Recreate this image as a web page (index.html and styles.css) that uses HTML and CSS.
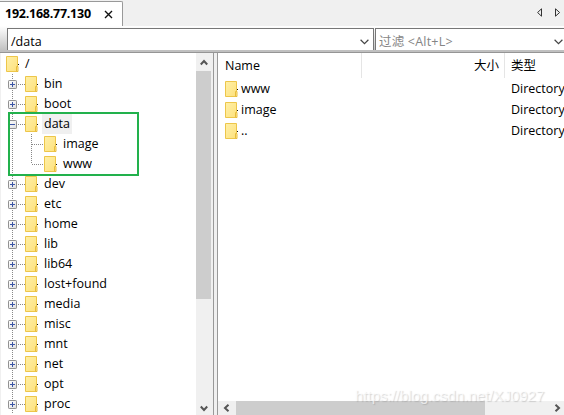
FILE: index.html
```html
<!DOCTYPE html>
<html lang="zh">
<head>
<meta charset="utf-8">
<title>192.168.77.130</title>
<link rel="stylesheet" href="styles.css">
</head>
<body>
<svg class="defs" width="0" height="0">
  <defs>
    <linearGradient id="paper" x1="0" y1="0" x2="1" y2="1">
      <stop offset="0" stop-color="#fff0a8"/><stop offset="1" stop-color="#fde17c"/>
    </linearGradient>
    <linearGradient id="key" x1="0" y1="0" x2="1" y2="1">
      <stop offset="0" stop-color="#fff"/><stop offset="1" stop-color="#dedede"/>
    </linearGradient>
    <symbol id="folder" viewBox="0 0 13 16">
      <path d="M.5 .5h11v15H.5z" fill="url(#paper)" stroke="#edc64a"/>
      <path d="M10.5 15.5v-5h1.5v5z" fill="#ffe99a" stroke="#e8bd3d"/>
      <path d="M12 8h1v1h-1z" fill="#111"/>
    </symbol>
    <symbol id="plus" viewBox="0 0 9 9">
      <rect x=".5" y=".5" width="8" height="8" rx=".7" fill="url(#key)" stroke="#919191"/>
      <path d="M2 4.5h5M4.5 2v5" stroke="#3b55a5"/>
    </symbol>
    <symbol id="minus" viewBox="0 0 9 9">
      <rect x=".5" y=".5" width="8" height="8" rx=".7" fill="url(#key)" stroke="#919191"/>
      <path d="M2 4.5h5" stroke="#3b55a5"/>
    </symbol>
  </defs>
</svg>
<div class="app">
  <header class="tabs">
    <div class="tab"><b>192.168.77.130</b>
      <svg width="9" height="9" viewBox="0 0 9 9"><path d="M1 1l7 7M8 1L1 8" stroke="#111" stroke-width="1.4"/></svg>
    </div>
    <div class="pager">
      <svg width="6" height="9" viewBox="0 0 6 9"><path d="M4.5 .8v7.4L.6 4.5z" fill="none" stroke="#333"/></svg>
      <svg width="6" height="9" viewBox="0 0 6 9"><path d="M.5 .8v7.4l4.1-3.7z" fill="none" stroke="#333"/></svg>
    </div>
  </header>
  <div class="bar">
    <div class="combo path"><span>/data</span><svg width="9" height="6" viewBox="0 0 9 6"><path d="M.6 .8l3.9 3.8L8.4 .8" fill="none" stroke="#444" stroke-width="1.2"/></svg></div>
    <div class="combo filter"><span>过滤 &lt;Alt+L&gt;</span><svg width="9" height="6" viewBox="0 0 9 6"><path d="M.6 .8l3.9 3.8L8.4 .8" fill="none" stroke="#444" stroke-width="1.2"/></svg></div>
  </div>
  <main class="panes">
    <section class="tree">
      <div class="nodes">
        <div class="row root"><svg class="f"><use href="#folder"/></svg><span>/</span></div>
        <div class="kids">
          <div class="row"><svg class="x"><use href="#plus"/></svg><i></i><svg class="f"><use href="#folder"/></svg><span>bin</span></div>
          <div class="row"><svg class="x"><use href="#plus"/></svg><i></i><svg class="f"><use href="#folder"/></svg><span>boot</span></div>
          <div class="row"><svg class="x"><use href="#minus"/></svg><i></i><svg class="f"><use href="#folder"/></svg><span class="sel">data</span></div>
          <div class="row sub"><i></i><svg class="f"><use href="#folder"/></svg><span>image</span></div>
          <div class="row sub last"><i></i><svg class="f"><use href="#folder"/></svg><span>www</span></div>
          <div class="row"><svg class="x"><use href="#plus"/></svg><i></i><svg class="f"><use href="#folder"/></svg><span>dev</span></div>
          <div class="row"><svg class="x"><use href="#plus"/></svg><i></i><svg class="f"><use href="#folder"/></svg><span>etc</span></div>
          <div class="row"><svg class="x"><use href="#plus"/></svg><i></i><svg class="f"><use href="#folder"/></svg><span>home</span></div>
          <div class="row"><svg class="x"><use href="#plus"/></svg><i></i><svg class="f"><use href="#folder"/></svg><span>lib</span></div>
          <div class="row"><svg class="x"><use href="#plus"/></svg><i></i><svg class="f"><use href="#folder"/></svg><span>lib64</span></div>
          <div class="row"><svg class="x"><use href="#plus"/></svg><i></i><svg class="f"><use href="#folder"/></svg><span>lost+found</span></div>
          <div class="row"><svg class="x"><use href="#plus"/></svg><i></i><svg class="f"><use href="#folder"/></svg><span>media</span></div>
          <div class="row"><svg class="x"><use href="#plus"/></svg><i></i><svg class="f"><use href="#folder"/></svg><span>misc</span></div>
          <div class="row"><svg class="x"><use href="#plus"/></svg><i></i><svg class="f"><use href="#folder"/></svg><span>mnt</span></div>
          <div class="row"><svg class="x"><use href="#plus"/></svg><i></i><svg class="f"><use href="#folder"/></svg><span>net</span></div>
          <div class="row"><svg class="x"><use href="#plus"/></svg><i></i><svg class="f"><use href="#folder"/></svg><span>opt</span></div>
          <div class="row"><svg class="x"><use href="#plus"/></svg><i></i><svg class="f"><use href="#folder"/></svg><span>proc</span></div>
        </div>
      </div>
      <div class="vscroll">
        <div class="up"><svg width="8" height="7" viewBox="0 0 8 7"><path d="M.8 5.5L4 2l3.2 3.5" fill="none" stroke="#555" stroke-width="2"/></svg></div>
        <div class="vthumb"></div>
        <div class="down"><svg width="8" height="7" viewBox="0 0 8 7"><path d="M.8 1.5L4 5l3.2-3.5" fill="none" stroke="#555" stroke-width="2"/></svg></div>
      </div>
    </section>
    <section class="list">
      <div class="head"><span class="name">Name</span><span class="size">大小</span><span class="type">类型</span></div>
      <div class="item"><svg class="f"><use href="#folder"/></svg><span class="label">www</span><span>Directory</span></div>
      <div class="item"><svg class="f"><use href="#folder"/></svg><span class="label">image</span><span>Directory</span></div>
      <div class="item"><svg class="f"><use href="#folder"/></svg><span class="label">..</span><span>Directory</span></div>
      <div class="hscroll">
        <div class="left"><svg width="7" height="8" viewBox="0 0 7 8"><path d="M5.5 .8L2 4l3.5 3.2" fill="none" stroke="#555" stroke-width="2"/></svg></div>
        <div class="hthumb"></div>
        <div class="right"><svg width="7" height="8" viewBox="0 0 7 8"><path d="M1.5 .8L5 4 1.5 7.2" fill="none" stroke="#555" stroke-width="2"/></svg></div>
      </div>
    </section>
  </main>
  <div class="marker"></div>
  <div class="watermark">https://blog.csdn.net/XJ0927</div>
</div>
</body>
</html>
```
FILE: styles.css
```css
* { box-sizing: border-box; }
body { margin: 0; background: #fff; }
svg { display: block; flex: none; }
.defs { position: absolute; }
.app {
  position: relative;
  display: flex;
  flex-direction: column;
  width: 564px;
  height: 415px;
  overflow: hidden;
  color: #000;
  font: 12.5px/20px "Open Sans", "Noto Sans CJK SC", sans-serif;
  white-space: nowrap;
}
.tabs { display: flex; justify-content: space-between; height: 26px; background: #f0f0f0; }
.tab {
  display: flex;
  align-items: center;
  width: 123px;
  height: 27px;
  margin-top: 1px;
  padding: 0 0 1px 5px;
  background: #fff;
  border: solid #999;
  border-width: 1px 1px 0 0;
  border-radius: 0 2px 0 0;
}
.tab b { width: 99px; padding-bottom: 1px; font-size: 12.5px; letter-spacing: -.25px; }
.pager { display: flex; gap: 12px; padding: 8px 3px 0 0; }
.bar {
  display: flex;
  gap: 1px;
  flex: none;
  height: 27px;
  padding: 2px 0 0 7px;
  background: linear-gradient(#fff, #bdbdbd);
  border-bottom: 1px solid #959595;
  box-shadow: inset 0 -2px #c0c0c0;
}
.combo {
  display: flex;
  align-items: center;
  justify-content: space-between;
  height: 22px;
  padding: 5px 4px 0 3px;
  background: #fff;
  border: 1px solid #777;
  border-bottom: 0;
}
.path { width: 367px; }
.filter { flex: 1; padding-right: 1px; border-right: 0; color: #858585; }
.filter span { letter-spacing: .2px; }
.panes { display: flex; flex: 1; min-height: 0; background: #f0f0f0; }
.tree { display: flex; flex: none; width: 214px; padding-left: 1px; border-right: 1px solid #999; }
.nodes { width: 195px; padding-top: 1px; background: #fff; overflow: hidden; }
.row { display: flex; align-items: center; height: 20px; }
.root { padding-left: 5px; }
.f { width: 13px; height: 16px; }
.x { width: 9px; height: 9px; }
.kids {
  margin-left: 7px;
  background: repeating-linear-gradient(#888 0 1px, transparent 1px 2px) 4px 0 / 1px 100% no-repeat;
}
.row i {
  width: 8px;
  height: 1px;
  background: repeating-linear-gradient(90deg, transparent 0 1px, #888 1px 2px);
}
.row .f + span { margin-left: 6px; }
.row .f + .sel { margin-left: 4px; padding: 0 2px; background: #f0f0f0; }
.sub {
  padding-left: 23px;
  background: repeating-linear-gradient(#888 0 1px, transparent 1px 2px) 23px 0 / 1px 100% no-repeat;
}
.sub i { width: 13px; }
.last { background-size: 1px 10px; }
.vscroll { display: flex; flex-direction: column; width: 15px; }
.up { height: 18px; padding: 6px 0 0 4px; }
.vthumb { height: 228px; background: #cdcdcd; }
.down { margin-top: auto; height: 18px; padding: 8px 0 0 4px; }
.list {
  display: flex;
  flex-direction: column;
  flex: 1;
  min-width: 0;
  margin-left: 3px;
  background: #fff;
  border-left: 1px solid #999;
}
.head { display: flex; align-items: center; height: 25px; }
.head span { flex: none; height: 25px; padding-top: 3px; }
.head .name { width: 144px; padding-left: 7px; border-right: 1px solid #e5e5e5; }
.head .size { width: 143px; padding-right: 5px; text-align: right; border-right: 1px solid #e5e5e5; }
.head .type { padding-left: 6px; }
.item { display: flex; align-items: center; height: 21px; padding-left: 7px; }
.item .label { flex: none; width: 273px; padding-left: 3px; }
.hscroll { display: flex; height: 14px; margin-top: auto; background: #f0f0f0; }
.left { width: 18px; padding: 3px 0 0 5px; }
.hthumb { width: 249px; background: #cdcdcd; }
.right { margin-left: auto; padding: 3px 3px 0 0; }
.marker {
  position: absolute;
  left: 8px;
  top: 112px;
  width: 131px;
  height: 64px;
  border: 2px solid #22b14c;
}
.watermark {
  position: absolute;
  left: 355px;
  top: 386px;
  font: 15px/20px "Liberation Sans", sans-serif;
  color: rgba(255, 255, 255, .65);
  text-shadow: 1px 1px 1px rgba(120, 120, 120, .3);
}
```
